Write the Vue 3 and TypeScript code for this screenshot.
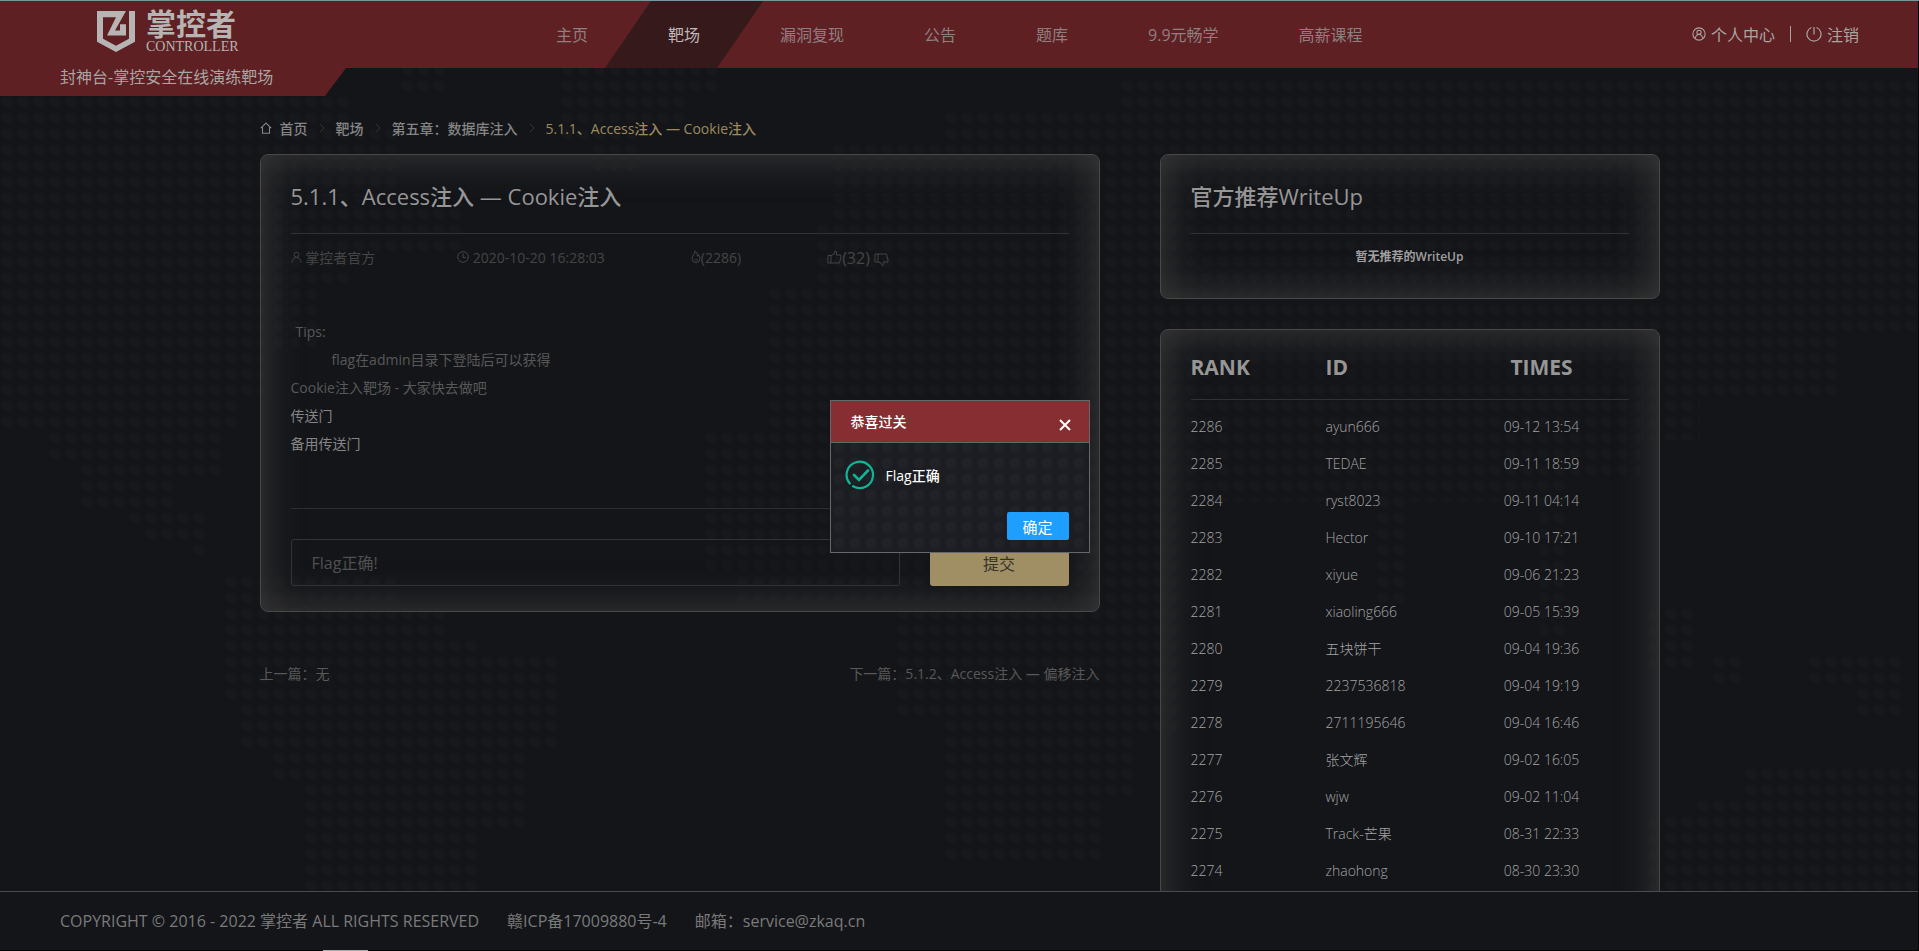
<script setup lang="ts">
interface RankRow { rank: number; id: string; time: string }
const nav: string[] = ['主页', '靶场', '漏洞复现', '公告', '题库', '9.9元畅学', '高薪课程']
const active = '靶场'
const rows: RankRow[] = [
  { rank: 2286, id: 'ayun666', time: '09-12 13:54' },
  { rank: 2285, id: 'TEDAE', time: '09-11 18:59' },
  { rank: 2284, id: 'ryst8023', time: '09-11 04:14' },
  { rank: 2283, id: 'Hector', time: '09-10 17:21' },
  { rank: 2282, id: 'xiyue', time: '09-06 21:23' },
  { rank: 2281, id: 'xiaoling666', time: '09-05 15:39' },
  { rank: 2280, id: '五块饼干', time: '09-04 19:36' },
  { rank: 2279, id: '2237536818', time: '09-04 19:19' },
  { rank: 2278, id: '2711195646', time: '09-04 16:46' },
  { rank: 2277, id: '张文辉', time: '09-02 16:05' },
  { rank: 2276, id: 'wjw', time: '09-02 11:04' },
  { rank: 2275, id: 'Track-芒果', time: '08-31 22:33' },
  { rank: 2274, id: 'zhaohong', time: '08-30 23:30' },
]
</script>

<template>
  <div class="page">
    <svg class="dots" aria-hidden="true">
      <defs>
        <pattern id="dot" width="16" height="16" patternUnits="userSpaceOnUse">
          <circle cx="7" cy="5" r="5" fill="#17181b" />
        </pattern>
      </defs>
      <g fill="url(#dot)">
        <path d="M0 96H352V128H400V208H464V256H352V288H320V352H272V400H240V432H224V480H176V512H208V560H192V544H144V528H128V512H80V464H48V432H0Z" />
        <path d="M400 64H448V96H400ZM560 64H720V96H688V128H640V176H592V144H560Z" />
        <path d="M224 576H400V608H448V640H480V656H560V752H528V832H480V896H304V784H272V752H240V704H224Z" />
        <path d="M832 144H944V112H1120V80H1919V336H1840V400H1700V440H1640V480H1568V640H1540V500H1408V608H1376V500H1180V736H1136V800H1100V864H944V720H896V608H736V576H704V432H768V336H768V288H816V224H832Z" />
        <path d="M1648 608H1696V672H1648ZM1712 656H1744V688H1712ZM1808 656H1904V720H1856V688H1808ZM1744 768H1919V896H1650V816H1696V800H1744Z" />
      </g>
    </svg>

    <header class="top">
      <div class="brand">
        <div class="logo">
          <svg viewBox="0 0 38 40" width="38" height="41" preserveAspectRatio="none" aria-hidden="true" fill="#b7b4b4">
            <path d="M0 0H29L18 19H23V13H29V24H10L19 6H6V27L19 34L32 27V0H38V30L19 40L0 30Z" />
          </svg>
          <div class="words"><b>掌控者</b><i>CONTROLLER</i></div>
        </div>
        <div class="slogan">封神台-掌控安全在线演练靶场</div>
      </div>
      <nav class="nav">
        <a v-for="n in nav" :key="n" href="#" :class="{ on: n === active }"><span>{{ n }}</span></a>
      </nav>
      <div class="user">
        <a href="#">
          <svg viewBox="0 0 16 16" width="14" height="14" fill="none" stroke="currentColor" stroke-width="1.2"><circle cx="8" cy="8" r="7" /><circle cx="8" cy="6" r="2.4" /><path d="M3.8 13C4.200 10 6 8.600 8 8.600S11.800 10 12.200 13" /></svg>
          个人中心</a>
        <span class="bar"></span>
        <a href="#">
          <svg viewBox="0 0 16 16" width="16" height="16" fill="none" stroke="currentColor" stroke-width="1.2"><path d="M5.500 1.500A7 7 0 1 0 10.500 1.500M8 1V8.500" /></svg>
          注销</a>
      </div>
    </header>

    <main class="content">
      <nav class="crumbs">
        <svg viewBox="0 0 12 12" width="12" height="12" fill="none" stroke="currentColor" stroke-width="1.1"><path d="M.8 6.200L6 1L11.200 6.200M2.500 5V11.200H9.500V5" /></svg>
        <a href="#">首页</a>
        <svg class="sep" viewBox="0 0 6 10" width="6" height="10"><path d="M1 1L5 5L1 9" /></svg>
        <a href="#">靶场</a>
        <svg class="sep" viewBox="0 0 6 10" width="6" height="10"><path d="M1 1L5 5L1 9" /></svg>
        <a href="#">第五章：数据库注入</a>
        <svg class="sep" viewBox="0 0 6 10" width="6" height="10"><path d="M1 1L5 5L1 9" /></svg>
        <a href="#" class="here">5.1.1、Access注入 — Cookie注入</a>
      </nav>

      <div class="cols">
        <div class="left">
          <article class="card lesson">
            <h1>5.1.1、Access注入 — Cookie注入</h1>
            <div class="meta">
              <span><svg viewBox="0 0 12 12" width="11" height="12"><circle cx="6" cy="3.500" r="2.700" /><path d="M1 12C1.200 8.500 3.500 6.500 6 6.500S10.800 8.500 11 12" /></svg> 掌控者官方</span>
              <span><svg viewBox="0 0 12 12" width="12" height="12"><circle cx="6" cy="6" r="5.300" /><path d="M6 2.500V6.500H9" /></svg> 2020-10-20 16:28:03</span>
              <span><svg viewBox="0 0 10 13" width="10" height="13"><path d="M4 1C4.500 4 1 5.500 1 8.500A4 4 0 0 0 9 8.500C9 6.500 8 5.500 7.500 4.500C7.300 5.500 7 6 6.300 6.200C6.500 4 6 2 4 1ZM3.800 9.500A1.500 1.500 0 0 0 6.500 9" /></svg>(2286)</span>
              <span class="votes"><svg viewBox="0 0 15 14" width="15" height="14"><path d="M1 5.500H4V13H1ZM4 5.500L7 4L8 1C9.800 .8 10 2.500 9 5H13.500L14 6.500L12.500 13H4" /></svg>(32)
                <svg class="down" viewBox="0 0 15 14" width="15" height="14"><path d="M1 1H4V9H1ZM4 9L7 10L8.500 13C10 12.500 10 11 9.500 9H14V7L12.500 1H4" /></svg></span>
            </div>
            <div class="body">
              <p class="tips">Tips:</p>
              <p class="hint">flag在admin目录下登陆后可以获得</p>
              <p>Cookie注入靶场 - 大家快去做吧</p>
              <p><a href="#">传送门</a></p>
              <p><a href="#">备用传送门</a></p>
            </div>
            <form class="answer" @submit.prevent>
              <input type="text" aria-label="Flag" placeholder="Flag正确!" />
              <button type="submit">提交</button>
            </form>
          </article>
          <div class="pager"><a href="#">上一篇：无</a><a href="#">下一篇：5.1.2、Access注入 — 偏移注入</a></div>
        </div>

        <aside class="right">
          <section class="card writeup">
            <h2>官方推荐WriteUp</h2>
            <p>暂无推荐的WriteUp</p>
          </section>
          <section class="card ranking">
            <table>
              <thead><tr><th>RANK</th><th>ID</th><th class="t">TIMES</th></tr></thead>
              <tbody>
                <tr v-for="r in rows" :key="r.rank"><td>{{ r.rank }}</td><td>{{ r.id }}</td><td class="t">{{ r.time }}</td></tr>
              </tbody>
            </table>
          </section>
        </aside>
      </div>
    </main>

    <footer class="foot">
      <span>COPYRIGHT © 2016 - 2022 掌控者 ALL RIGHTS RESERVED</span>
      <span>赣ICP备17009880号-4</span>
      <span>邮箱：service@zkaq.cn</span>
      <i class="handle"></i>
    </footer>

    <div class="dialog" role="dialog" aria-labelledby="dlg-title">
      <div class="dlg-head">
        <span id="dlg-title">恭喜过关</span>
        <button type="button" aria-label="关闭"><svg viewBox="0 0 12 12" width="12" height="12"><path d="M1 1L11 11M11 1L1 11" stroke="#fff" stroke-width="2" /></svg></button>
      </div>
      <div class="dlg-body">
        <svg viewBox="0 0 30 30" width="30" height="30" fill="none" stroke="#0db695" stroke-width="2.200" stroke-linecap="round"><path d="M4.800 23.500A13.200 13.200 0 1 1 8 26.200" /><path d="M9 15L14 20L23 10.500" stroke-width="2.600" /></svg>
        <span>Flag正确</span>
      </div>
      <div class="dlg-foot"><button type="button">确定</button></div>
    </div>
  </div>
</template>

<style>
html, body { height: 100%; background: #141519; }
#app { height: 100%; }
</style>

<style scoped>
* { box-sizing: border-box; }
.page { position: relative; height: 100vh; overflow: hidden; display: flex; flex-direction: column; background: #141519; color: #858585; font-family: "Open Sans", "Noto Sans CJK SC", sans-serif; font-size: 14px; border-top: 1px solid #7b94a1; }
.page::after { content: ""; position: absolute; top: 0; right: 0; bottom: 0; width: 1px; background: #050506; }
a { color: inherit; text-decoration: none; }
h1, h2, p { margin: 0; }
.dots { position: absolute; left: 0; top: 0; width: 100%; height: 100%; }
.top { position: relative; display: flex; height: 67px; flex: none; background: #5e2022; font-size: 16px; color: #aaa5a5; }
.brand { width: 346px; height: 95px; background: #5e2022; clip-path: polygon(0 0, 100% 0, 100% 67px, 325px 100%, 0 100%); display: flex; flex-direction: column; padding-left: 60px; }
.logo { display: flex; gap: 11px; padding: 10px 0 0 37px; height: 63px; }
.words { display: flex; flex-direction: column; color: #b7b4b4; }
.words b { font-size: 30px; line-height: 26px; font-weight: 700; }
.words i { font: normal 14px/16px "Liberation Serif", serif; padding-top: 2px; }
.slogan { font-size: 16px; line-height: 26px; }
.nav { display: flex; margin-left: 170px; line-height: 69px; color: #8f7f80; }
.nav a { position: relative; padding: 0 40px; height: 67px; }
.nav span { position: relative; }
.nav .on { color: #c0b8b8; }
.nav .on::before { content: ""; position: absolute; inset: 0 -23px; background: #35191b; clip-path: polygon(46px 0, 100% 0, calc(100% - 46px) 100%, 0 100%); }
.user { margin-left: auto; margin-right: 60px; padding-bottom: 1px; display: flex; align-items: center; gap: 15px; }
.user a { display: flex; align-items: center; gap: 5px; }
.bar { width: 1px; height: 16px; background: #aaa5a5; }
.content { position: relative; flex: 1; min-height: 0; overflow: hidden; width: 1400px; max-width: 100%; margin: 0 auto; padding-top: 47px; }
.crumbs { display: flex; align-items: center; height: 26px; gap: 8px; color: #858585; font-weight: 500; margin-bottom: 13px; }
.sep { margin: 0 3px; fill: none; stroke: #38352f; }
.here { color: #9c8a5e; }
.cols { display: flex; gap: 60px; }
.left { flex: 1; min-width: 0; }
.right { width: 500px; }
.card { border: 1px solid #484848; border-radius: 8px; padding: 0 30px; box-shadow: inset 0 0 40px #3d3d3d; }
h1, h2 { font-size: 22px; font-weight: 500; line-height: 36px; padding: 23px 0 19px; border-bottom: 1px solid #303134; color: #969696; }
.meta { display: flex; gap: 86px; color: #454545; line-height: 22px; padding-top: 13px; }
.meta svg { fill: none; stroke: currentColor; }
.meta span { white-space: nowrap; }
.meta span:first-child { margin-right: -4px; }
.votes { font-size: 16px; }
.meta .down { vertical-align: -3px; }
.body { margin-top: 49px; padding-bottom: 50px; border-bottom: 1px solid #2e2e30; color: #585858; line-height: 28px; }
.body a { color: #858585; }
.tips { padding-left: 5px; }
.hint { padding-left: 41px; }
.answer { display: flex; gap: 30px; padding: 30px 0 25px; }
.answer input { flex: 1; min-width: 0; height: 47px; border: 1px solid #333335; border-radius: 3px; background: transparent; padding: 0 20px; font: inherit; font-size: 16px; color: #505050; }
.answer input::placeholder { color: #505050; }
.answer button { width: 139px; border: 0; border-radius: 3px; background: #a08f64; color: #35322a; font: inherit; font-size: 16px; }
.pager { display: flex; justify-content: space-between; margin-top: 50px; line-height: 24px; color: #585858; }
.writeup { height: 145px; }
.writeup p { font-size: 12px; font-weight: 600; text-align: center; line-height: 22px; padding-top: 12px; color: #a0a0a0; }
.ranking { margin-top: 30px; padding-bottom: 60px; }
table { width: 100%; border-collapse: collapse; table-layout: fixed; }
th { text-align: left; font-size: 21px; line-height: 28px; padding: 23px 0 18px; color: #969696; border-bottom: 1px solid #303134; }
td { padding: 0; line-height: 37px; font-size: 14px; font-weight: 300; color: #a4a4a4; }
tbody::before { content: ""; display: block; height: 8px; }
th:nth-child(1) { width: 135px; }
th:nth-child(3) { width: 174px; }
.t { text-align: center; }
.foot { position: relative; flex: none; height: 60px; border-top: 1px solid #4b4b4d; border-bottom: 1px solid #050506; background: #141519; padding: 0 60px 2px; display: flex; align-items: center; gap: 28px; font-size: 16px; color: #7a7a7a; }
.handle { position: absolute; bottom: -1px; left: 323px; width: 45px; height: 1px; background: #aaa; }
.dialog { position: absolute; left: calc(50% - 130px); top: calc(50% - 76px); width: 260px; height: 153px; border: 1px solid #66676a; color: #fff; background: radial-gradient(circle, #212226 5px, transparent 6px) 0 6px / 16px 16px #1c1d22; }
.dlg-head { display: flex; justify-content: space-between; align-items: center; height: 42px; padding: 0 18px 2px 20px; background: #862e31; border-bottom: 1px solid #66676a; font-weight: 500; }
.dlg-head button { background: none; border: 0; padding: 8px 0 0; display: flex; }
.dlg-body { display: flex; align-items: center; gap: 11px; padding: 17px 14px 0; font-weight: 500; }
.dlg-foot { display: flex; justify-content: flex-end; padding: 22px 20px 0 0; }
.dlg-foot button { width: 62px; height: 28px; border: 0; border-radius: 2px; background: #1e9fff; color: #fff; font: inherit; font-size: 15px; }
</style>
